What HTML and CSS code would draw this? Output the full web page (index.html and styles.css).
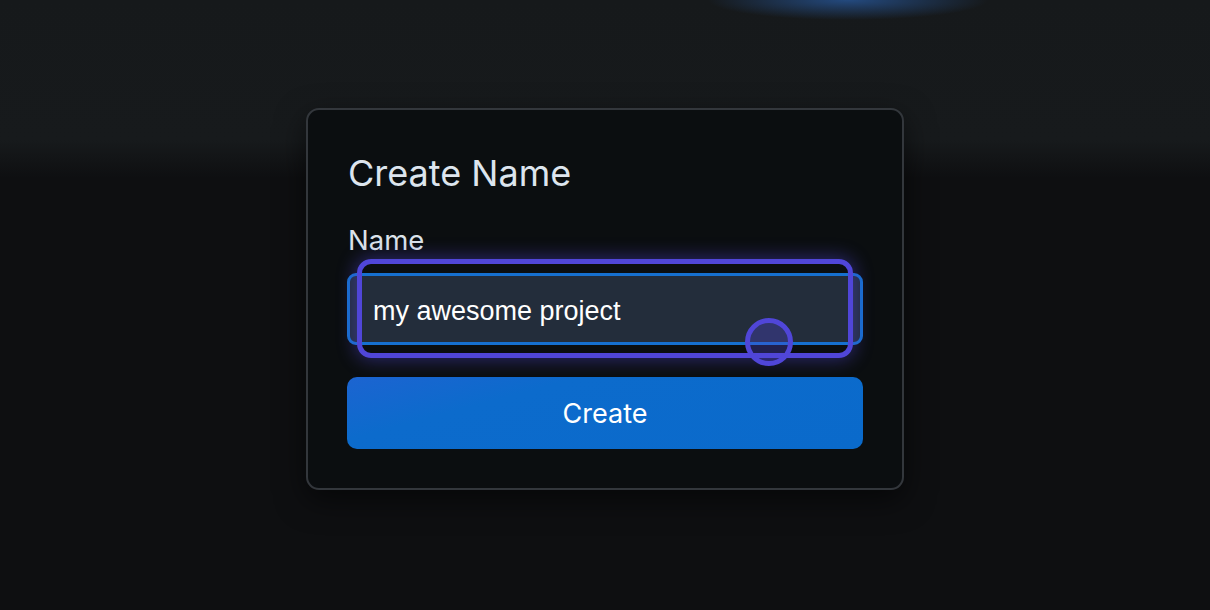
FILE: index.html
```html
<!DOCTYPE html>
<html lang="en">
<head>
<meta charset="utf-8">
<title>Create Name</title>
<link rel="stylesheet" href="styles.css">
</head>
<body>
<div class="page">
  <form class="card" onsubmit="return false">
    <h1 class="title">Create Name</h1>
    <label class="label" for="name">Name</label>
    <div class="field">
      <input id="name" class="input" type="text" value="my awesome project">
      <span class="focus-ring" aria-hidden="true"></span>
      <span class="cursor-dot" aria-hidden="true"></span>
    </div>
    <button class="button" type="submit">Create</button>
  </form>
</div>
</body>
</html>
```

FILE: styles.css
```css
* { box-sizing: border-box; }

html, body {
  margin: 0;
  height: 100%;
}

body {
  font-family: Inter, "Noto Sans", sans-serif;
  background:
    radial-gradient(ellipse 140px 20px at 848px 0px, rgba(40, 90, 160, 0.75), rgba(40, 90, 160, 0) 100%),
    linear-gradient(180deg, #16191b 0px, #171a1c 140px, #0e0f11 178px, #0e0f11 100%);
  color: #dce3ea;
}

.page {
  height: 100%;
  display: flex;
  align-items: center;
  justify-content: center;
}

.card {
  width: 598px;
  margin-bottom: 12px;
  padding: 42px 40px 39px;
  background: #0b0e10;
  border: 2px solid #33373c;
  border-radius: 13px;
  box-shadow: 0 10px 30px rgba(0, 0, 0, 0.55);
  display: flex;
  flex-direction: column;
}

.title {
  margin: 0;
  font-size: 36px;
  line-height: 42px;
  font-weight: 400;
  color: #dde5ee;
}

.label {
  margin-top: 31px;
  font-size: 27.5px;
  line-height: 30px;
  color: #dce3ea;
}

.field {
  position: relative;
  margin: 18px -1px 0;
}

.input {
  display: block;
  width: 100%;
  height: 72px;
  padding: 4px 23px 0;
  border: 3px solid #1670cf;
  border-radius: 9px;
  background: #232d3b;
  color: #ffffff;
  font-family: "Liberation Sans", Arial, sans-serif;
  font-size: 27px;
  outline: none;
}

.focus-ring {
  position: absolute;
  left: 10px;
  right: 10px;
  top: -14px;
  bottom: -13px;
  border: 5px solid #5046d8;
  border-radius: 14px;
  box-shadow: 0 0 18px 2px rgba(80, 70, 216, 0.45);
  pointer-events: none;
}

.cursor-dot {
  position: absolute;
  left: 398px;
  top: 45px;
  width: 48px;
  height: 48px;
  border: 5px solid #5046d8;
  border-radius: 50%;
  background: rgba(80, 70, 216, 0.32);
  pointer-events: none;
}

.button {
  margin: 32px -1px 0;
  height: 72px;
  border: 0;
  border-radius: 10px;
  background: linear-gradient(165deg, #1c64d1 0%, #0c6bcc 30%, #0a6acb 100%);
  color: #ffffff;
  font-family: Inter, "Noto Sans", sans-serif;
  font-size: 27px;
  cursor: pointer;
}
```
